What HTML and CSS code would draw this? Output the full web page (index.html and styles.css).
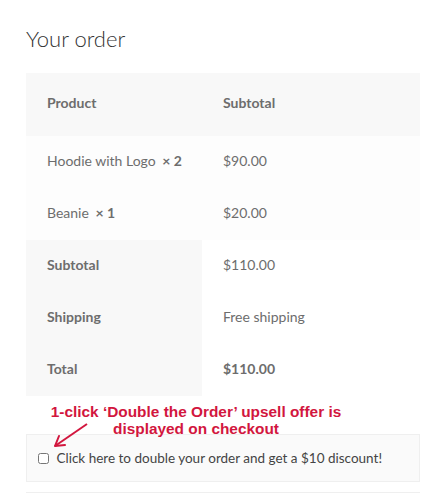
FILE: index.html
```html
<!DOCTYPE html>
<html lang="en">
  <head>
    <meta charset="utf-8" />
    <meta name="viewport" content="width=device-width, initial-scale=1" />
    <title>Checkout|Your order</title>
    <link rel="stylesheet" href="styles.css">
  </head>
  <body>
    <div class="checkout">
        <h3 class="order-title">Your order</h3>
        <table class="order-table">
            <colgroup>
                <col class="col-name" />
                <col />
            </colgroup>
            <thead>
                <tr>
                    <th>Product</th>
                    <th>Subtotal</th>
                </tr>
            </thead>
            <tbody>
                <tr class="item">
                    <td>Hoodie with Logo <strong class="qty">&times;&nbsp;2</strong></td>
                    <td>$90.00</td>
                </tr>
                <tr class="item">
                    <td>Beanie <strong class="qty">&times;&nbsp;1</strong></td>
                    <td>$20.00</td>
                </tr>
            </tbody>
            <tfoot>
                <tr>
                    <th>Subtotal</th>
                    <td>$110.00</td>
                </tr>
                <tr>
                    <th>Shipping</th>
                    <td>Free shipping</td>
                </tr>
                <tr>
                    <th>Total</th>
                    <td><strong>$110.00</strong></td>
                </tr>
            </tfoot>
        </table>

        <!--annotation over the upsell box-->
        <div class="note">
            <p>1-click &lsquo;Double the Order&rsquo; upsell offer is<br />displayed on checkout</p>
            <svg class="arrow" width="40" height="28" viewBox="0 0 40 28">
                <path d="M37 2 L5 24" stroke="#d2163e" stroke-width="2" fill="none" />
                <path d="M5 24 L9 14 M5 24 L15 23" stroke="#d2163e" stroke-width="2" fill="none" stroke-linecap="round" />
            </svg>
        </div>

        <div class="upsell">
            <label><input type="checkbox" name="double" /> Click here to double your order and get a $10 discount!</label>
        </div>
        <div class="next-box"></div>
    </div>
  </body>
</html>
```

FILE: styles.css
```css
body{
    margin: 0;
    font-family: "Lato", "Open Sans", sans-serif;
    color: #6d6d6d;
    background-color: #fff;
}

.checkout{
    width: 394px;
    margin-left: 26px;
    padding-top: 26px;
}

.order-title{
    margin: 0 0 21px 0;
    font-size: 22px;
    font-weight: 300;
    color: #333;
    line-height: 26px;
}

.order-table{
    width: 100%;
    border-collapse: collapse;
    table-layout: fixed;
    font-size: 14px;
}

.order-table .col-name{
    width: 176px;
}

.order-table th,
.order-table td{
    text-align: left;
    padding: 0 21px 4px 21px;
    height: 48px;
    white-space: nowrap;
}

.order-table thead th{
    height: 59px;
    background-color: #f8f8f8;
    font-weight: 700;
}

.order-table .item td{
    background-color: #fdfdfd;
}

.order-table .qty{
    font-weight: 700;
    margin-left: 3px;
}

.order-table tfoot th{
    background-color: #f8f8f8;
    font-weight: 700;
}

.note{
    position: relative;
    height: 38px;
}

.note p{
    margin: 0;
    padding-top: 7px;
    width: 340px;
    text-align: center;
    font-family: "Liberation Sans", Arial, sans-serif;
    font-weight: 700;
    font-size: 15.4px;
    line-height: 17px;
    color: #d2163e;
}

.arrow{
    position: absolute;
    left: 24px;
    top: 26px;
}

.upsell{
    border: 1px solid #efefef;
    background-color: #fafafa;
    height: 46px;
    padding: 0 11px;
    display: flex;
    align-items: center;
    font-size: 13.5px;
    color: #444;
}

.upsell input{
    margin: 0 4px 0 0;
    width: 11px;
    height: 11px;
    vertical-align: -1px;
}

.next-box{
    margin-top: 10px;
    border-top: 1px solid #efefef;
    height: 4px;
}
```
